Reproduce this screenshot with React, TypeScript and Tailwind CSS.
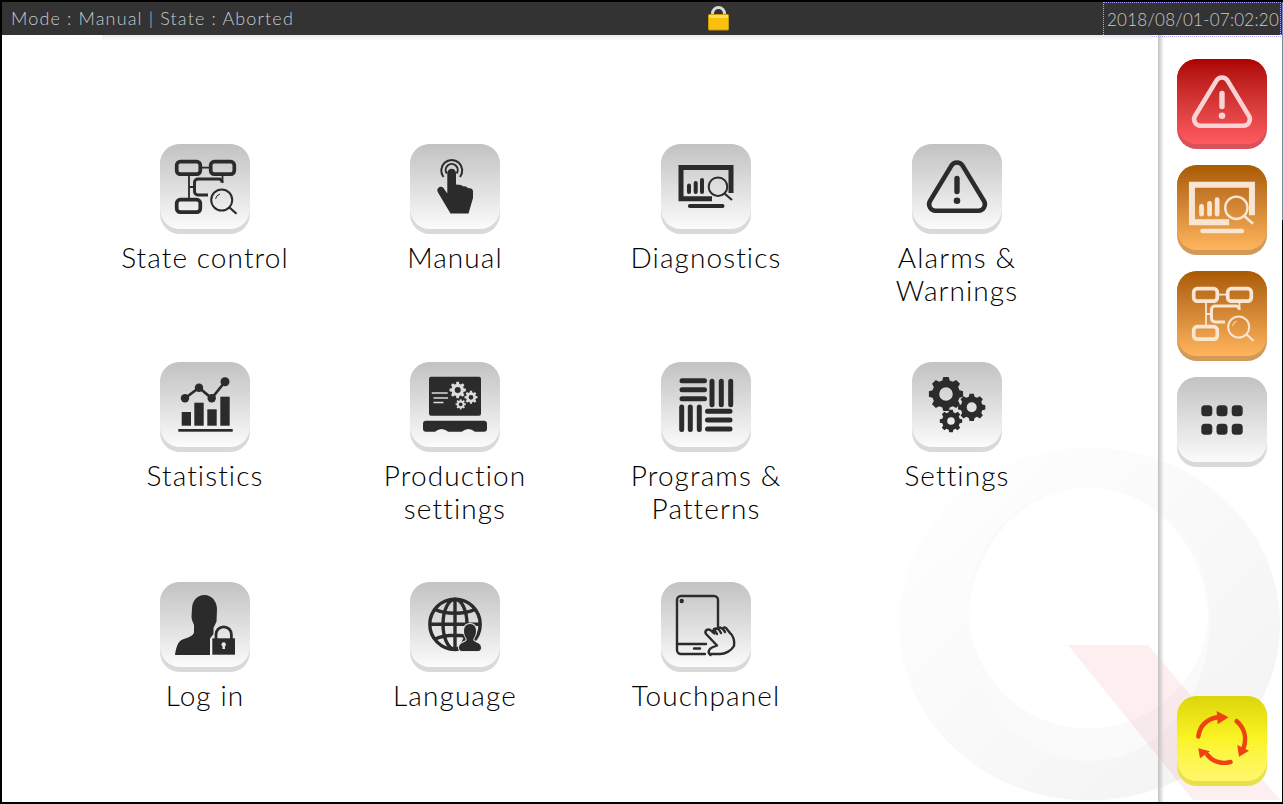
import React from 'react';

const gearPath = (cx: number, cy: number, outer: number, root: number, hole: number, teeth: number) => {
  const step = (Math.PI * 2) / teeth;
  const pts: string[] = [];
  for (let i = 0; i < teeth; i++) {
    const a = i * step - Math.PI / 2;
    const corners: [number, number][] = [
      [root, a - step * 0.34],
      [outer, a - step * 0.2],
      [outer, a + step * 0.2],
      [root, a + step * 0.34],
    ];
    corners.forEach(([r, t]) => {
      pts.push(`${(cx + r * Math.cos(t)).toFixed(2)} ${(cy + r * Math.sin(t)).toFixed(2)}`);
    });
  }
  const ring = `M${cx - hole} ${cy}a${hole} ${hole} 0 1 0 ${hole * 2} 0a${hole} ${hole} 0 1 0 ${-hole * 2} 0Z`;
  return `M${pts.join('L')}Z${ring}`;
};

const Flow = () => (
  <g fill="none" stroke="currentColor">
    <rect x="16.7" y="17.7" width="23.6" height="12.4" rx="3.5" strokeWidth="3.7" />
    <rect x="50.7" y="17.7" width="23.6" height="12.4" rx="3.5" strokeWidth="3.7" />
    <rect x="16.7" y="55.7" width="23.6" height="12.4" rx="3.5" strokeWidth="3.7" />
    <path d="M42 23.7h8M29 31v24M29 43h5" strokeWidth="1.8" />
    <path d="M62 38.5v-.5a3 3 0 0 0-3-3H38a3.500 3.500 0 0 0-3.500 3.500v9a3.500 3.500 0 0 0 3.500 3.500h10" strokeWidth="3" />
    <path d="M62.500 31v8" strokeWidth="1.800" />
    <circle cx="61.700" cy="56" r="10.500" strokeWidth="2" />
    <path d="M69.500 63.500l7 6.300" strokeWidth="2.200" />
    <path d="M55.500 55a6.500 6.500 0 0 1 4.500-5" strokeWidth="1" />
  </g>
);

const Hand = () => (
  <g>
    <path d="M33.500 33a10.500 10.500 0 1 1 16.500 0" fill="none" stroke="currentColor" strokeWidth="2" />
    <path d="M36.800 29.500a6 6 0 1 1 9.800 0" fill="none" stroke="currentColor" strokeWidth="2" />
    <path
      fill="currentColor"
      d="M37.300 29a4.300 4.300 0 0 1 8.700 0v11.500l5 .5 2 1.200 3 .2 2 1.600 3 .5c1.500.6 2 1.500 2 3v6.500L58.500 69.500H40.500L28 48.500c-1.500-2.500-.5-4.500 1.500-5.500 1.500-.6 3-.2 4 1l3.800 5.500z"
    />
  </g>
);

const Monitor = () => (
  <g stroke="currentColor" fill="none">
    <path d="M70 49V23.500H20V54.800h31" strokeWidth="5" />
    <path d="M28 48v-6.500M34.700 48v-9M41 48v-12" strokeWidth="4" strokeLinecap="round" />
    <circle cx="57" cy="42.700" r="9.300" strokeWidth="2" />
    <path d="M63.500 49.500l7.500 6.500" strokeWidth="2.200" />
    <path d="M28.800 62h32.800" strokeWidth="3.800" strokeLinecap="round" />
  </g>
);

const Alert = () => (
  <g>
    <path
      d="M39.500 21.500a6.500 6.500 0 0 1 11 0L72 57a6.500 6.500 0 0 1-5.500 9.800H23.500A6.500 6.500 0 0 1 18 57z"
      fill="none"
      stroke="currentColor"
      strokeWidth="4.500"
    />
    <path d="M45 34.500v13" stroke="currentColor" strokeWidth="5.400" strokeLinecap="round" />
    <circle cx="45" cy="56.700" r="3.300" fill="currentColor" />
  </g>
);

const Stats = () => (
  <g fill="currentColor">
    <rect x="21.700" y="50" width="9.300" height="13.700" />
    <rect x="34.300" y="40.700" width="9.400" height="23" />
    <rect x="47.300" y="47.300" width="9.400" height="16.400" />
    <rect x="60.300" y="34.700" width="9.400" height="29" />
    <rect x="18.300" y="67" width="54.400" height="2.700" />
    <path d="M25 36.300L39 25.700l12.700 10.600L65 19.700" fill="none" stroke="currentColor" strokeWidth="2.600" />
    <circle cx="25" cy="36.300" r="4.200" />
    <circle cx="39" cy="25.700" r="4.200" />
    <circle cx="51.700" cy="36.300" r="4.200" />
    <circle cx="65" cy="19.700" r="4.500" />
  </g>
);

const Production = () => (
  <g>
    <rect x="19" y="14.700" width="52" height="39" rx="2" fill="currentColor" />
    <path
      fill="currentColor"
      d="M16 58.700h58a3 3 0 0 1 3 3v5a3 3 0 0 1-3 3H65Q58.500 64.500 51.700 69.700H38.300Q31.500 64.500 25 69.700H16a3 3 0 0 1-3-3v-5a3 3 0 0 1 3-3z"
    />
    <path d="M21.700 31h16M23.500 36h14.500M23.500 40.500h10" stroke="#dcdcdc" strokeWidth="1.300" fill="none" />
    <path fill="#dcdcdc" fillRule="evenodd" d={gearPath(47.7, 28, 8.300, 6.300, 3, 8)} />
    <path fill="#dcdcdc" fillRule="evenodd" d={gearPath(61, 35.300, 6.600, 5, 2.400, 8)} />
    <path fill="#dcdcdc" fillRule="evenodd" d={gearPath(50.700, 42.300, 5.200, 3.900, 1.900, 8)} />
  </g>
);

const Patterns = () => (
  <path
    fill="none"
    stroke="currentColor"
    strokeWidth="5"
    strokeLinecap="round"
    d="M21 18.700h22.500M21 27.700h22.500M21 36.700h22.500M51 19.200v23.500M60.300 19.200v23.500M69.700 19.200v23.500M20.700 45v22.500M29.300 45v22.500M38.300 45v22.500M46.500 49.300h22.500M46.500 58h22.500M46.500 67h22.500"
  />
);

const Gears = () => (
  <g fill="currentColor" fillRule="evenodd">
    <path d={gearPath(34, 32, 17.300, 14, 6.800, 8)} />
    <path d={gearPath(59.700, 45.300, 13.800, 11, 5, 8)} />
    <path d={gearPath(39, 59, 11.300, 9, 3.800, 8)} />
  </g>
);

const Login = () => (
  <g fill="currentColor">
    <path d="M44.500 13c-8 0-12.500 6.500-12.500 14l-.5 7.500c0 3 1.500 6 2.500 8.500v7c0 3.500-5.500 5.500-11.500 7.500-5 1.700-6.500 9-7.500 15.500h35V56.500l3.500-4.500v-6l3-6.500.5-12c0-8-5-14.500-12.500-14.500z" />
    <path d="M52.300 56.300h22.700v16.400H52.300z" />
    <path d="M56 57v-4.500a7.700 7.700 0 0 1 15.400 0V57" fill="none" stroke="currentColor" strokeWidth="2.800" />
    <circle cx="63.700" cy="62.500" r="2.200" fill="#e8e8e8" />
    <path d="M62.800 63h1.800l.5 4h-2.800z" fill="#e8e8e8" />
  </g>
);

const Globe = () => (
  <g>
    <g fill="none" stroke="currentColor" strokeWidth="3.400">
      <circle cx="45" cy="42.300" r="25.200" />
      <ellipse cx="45" cy="42.300" rx="12" ry="25" />
      <path d="M45 17.300v50M20 42.300h50M25 27.500c11 5 29 5 40 0M25 57c11-5 29-5 40 0" />
    </g>
    <path
      fill="currentColor"
      stroke="#e6e6e6"
      strokeWidth="2"
      paintOrder="stroke"
      d="M60 42c-4 0-6 3-6 7 0 3 1 5.500 2.500 7.500v2c-1.500 2-7.500 2.500-7.500 7 0 1.500.5 3.500 3 3.500h16c2.500 0 3-2 3-3.500 0-4.500-6-5-7.500-7v-2c1.500-2 2.500-4.500 2.500-7.500 0-4-2-7-6-7z"
    />
  </g>
);

const Tablet = () => (
  <g fill="none" stroke="currentColor" strokeWidth="2.400" strokeLinecap="round" strokeLinejoin="round">
    <path d="M57 44V18a4 4 0 0 0-4-4H20a4 4 0 0 0-4 4v50a4 4 0 0 0 4 4h24" />
    <path d="M16 62h29M33 66.500h6" />
    <circle cx="20.700" cy="19" r="1" fill="currentColor" />
    <path d="M49 72h10c5 0 11-3 14-8 1-5-1-11-4-13l-4-5c-1-1-3-1-3 1l-2-1c-1-1-3 0-3 1l-2-.5c-1.500 0-3 1-2.500 3l1 2-3-2.500c-2-2-4.500-2-5.500-.5s-.5 3 .5 4l10.500 11-5 2c-2 1-5.500 4.500-1.500 7.500" />
    <path d="M53 47l3 5M57 46l3 5M62 47l2 3" />
  </g>
);

const Dots = () => (
  <g fill="currentColor">
    <rect x="24.300" y="28.300" width="11" height="11" rx="3.500" />
    <rect x="39.500" y="28.300" width="11" height="11" rx="3.500" />
    <rect x="54.700" y="28.300" width="11" height="11" rx="3.500" />
    <rect x="24.300" y="46.700" width="11" height="11" rx="3.500" />
    <rect x="39.500" y="46.700" width="11" height="11" rx="3.500" />
    <rect x="54.700" y="46.700" width="11" height="11" rx="3.500" />
  </g>
);

const Cycle = () => (
  <g fill="none" stroke="#ee4212" strokeWidth="4.500" strokeLinecap="round">
    <path d="M21.300 40.500C22.500 30 30 22.500 41 21.200" />
    <path d="M59.700 25.200C67.500 32 70 42 66.500 52" />
    <path d="M53.500 66c-8 2-17 .5-23-7" />
    <path d="M39.700 15l11.800 6.300-10.800 7z" fill="#ee4212" stroke="none" />
    <path d="M60.300 49l11.700 5.700-10 6z" fill="#ee4212" stroke="none" />
    <path d="M21.300 52.300l1.700 10 10-7z" fill="#ee4212" stroke="none" />
  </g>
);

const Tile = ({ children, tone = 'gray' }: { children: React.ReactNode; tone?: 'gray' | 'red' | 'orange' | 'yellow' }) => {
  const tones = {
    gray: 'bg-[#d9d9d9] text-[#2b2b2b]',
    red: 'bg-[#d9525a] text-[#f9d3d3]',
    orange: 'bg-[#d19a58] text-[#f8e6d3]',
    yellow: 'bg-[#e8e04a] text-[#ee4212]',
  };
  const faces = {
    gray: 'bg-gradient-to-b from-[#c2c2c2] to-[#fbfbfb]',
    red: 'bg-gradient-to-b from-[#ab0000] to-[#ff5a5f]',
    orange: 'bg-gradient-to-b from-[#a95b00] to-[#ffb55c]',
    yellow: 'bg-gradient-to-b from-[#dcd508] via-[#faf423] via-50% to-[#fff76a]',
  };
  return (
    <div className={`relative w-[90px] h-[90px] shrink-0 rounded-[20px] ${tones[tone]}`}>
      <div className={`w-[90px] h-[85px] rounded-[20px] ${faces[tone]}`} />
      <svg viewBox="0 0 90 90" className="absolute inset-0 w-[90px] h-[90px]">
        {children}
      </svg>
    </div>
  );
};

const menu = [
  { label: ['State control'], icon: <Flow /> },
  { label: ['Manual'], icon: <Hand /> },
  { label: ['Diagnostics'], icon: <Monitor /> },
  { label: ['Alarms &', 'Warnings'], icon: <Alert /> },
  { label: ['Statistics'], icon: <Stats /> },
  { label: ['Production', 'settings'], icon: <Production /> },
  { label: ['Programs &', 'Patterns'], icon: <Patterns /> },
  { label: ['Settings'], icon: <Gears /> },
  { label: ['Log in'], icon: <Login /> },
  { label: ['Language'], icon: <Globe /> },
  { label: ['Touchpanel'], icon: <Tablet /> },
];

const App: React.FC = () => {
  return (
    <div
      className="relative w-[1283px] h-[804px] overflow-hidden bg-white border-2 border-r-0 border-black flex flex-col"
      style={{ fontFamily: 'Lato, "Liberation Sans", sans-serif' }}
    >
      {/* Watermark logo */}
      <svg className="absolute left-[-2px] top-[-2px] w-[1283px] h-[804px]" viewBox="0 0 1283 804">
        <defs>
          <linearGradient id="ring" x1="0" y1="0" x2="1" y2="1">
            <stop offset="0" stopColor="#ffffff" />
            <stop offset="0.35" stopColor="#fbfbfb" />
            <stop offset="1" stopColor="#f2f2f2" />
          </linearGradient>
        </defs>
        <path
          fillRule="evenodd"
          fill="url(#ring)"
          d="M899 624a190 176 0 1 0 381 0a190 176 0 1 0-381 0zM968 624a120 136 0 1 1 241 0a120 136 0 1 1-241 0z"
        />
        <path
          fillRule="evenodd"
          fill="#fafafa"
          d="M968 624a120 136 0 1 0 241 0a120 136 0 1 0-241 0zM968 608a120 120 0 1 1 241 0a120 120 0 1 1-241 0z"
        />
        <path d="M1068 645h80l132 155h-87z" fill="#e03030" fillOpacity="0.08" />
      </svg>

      {/* Top bar */}
      <header className="relative h-[33px] shrink-0 bg-[#333333] flex items-start justify-between text-[#c6cace]">
        <span className="pl-[9px] h-[33px] leading-[33px] text-[18px] font-light tracking-[1.15px]">Mode : Manual | State : Aborted</span>
        <svg viewBox="0 0 24 26" className="absolute left-[704px] top-[4px] w-[24px] h-[26px]">
          <path d="M6.500 10V7.500a6 6 0 0 1 12 0V10" fill="none" stroke="#d9d9d9" strokeWidth="3" />
          <rect x="2.500" y="8.500" width="20" height="15.500" rx="1" fill="#fbc00c" stroke="#c79a0e" />
          <rect x="3" y="9" width="19" height="3" fill="#ffdc55" />
        </svg>
        <span className="h-[35px] w-[178px] mr-[2px] pl-[3px] flex items-center border border-dotted border-[#b0a8ff] whitespace-nowrap text-[17px] font-light tracking-[0.25px]">
          2018/08/01-07:02:20
        </span>
      </header>
      <div className="absolute left-[100px] top-[33px] w-[1050px] h-[6px] bg-gradient-to-b from-[#ececec] to-transparent" />
      <div className="absolute right-0 top-0 w-[1px] h-[218px] bg-[#7d8fa3]" />
      <div className="absolute right-0 top-[218px] bottom-0 w-[1px] bg-black" />

      <div className="relative flex-1 flex min-h-0">
        {/* Menu grid */}
        <main className="w-[1156px] pl-[78px] pt-[109px] grid grid-cols-[250px_250px_252px_250px] grid-rows-[218px_220px_auto]">
          {menu.map((item) => (
            <div key={item.label[0]} className="flex flex-col items-center">
              <Tile>{item.icon}</Tile>
              <div className="mt-[7px] text-center text-black text-[28px] font-light leading-[33px] tracking-[1.1px]">
                {item.label.map((line) => (
                  <div key={line}>{line}</div>
                ))}
              </div>
            </div>
          ))}
        </main>

        {/* Quick access column */}
        <aside className="w-[125px] flex flex-col items-center pl-[3px] pt-[24px] bg-gradient-to-r from-[#c0c0c0] via-transparent via-[6px] to-transparent">
          <div className="flex flex-col gap-[16px] pr-[1px]">
            <Tile tone="red">
              <Alert />
            </Tile>
            <Tile tone="orange">
              <g transform="translate(45.300 42.300) scale(1.2) translate(-45.300 -42.300)">
                <Monitor />
              </g>
            </Tile>
            <Tile tone="orange">
              <Flow />
            </Tile>
            <Tile>
              <Dots />
            </Tile>
          </div>
          <div className="mt-auto mb-[16px] pr-[1px]">
            <Tile tone="yellow">
              <Cycle />
            </Tile>
          </div>
        </aside>
      </div>
    </div>
  );
};

export default App;
